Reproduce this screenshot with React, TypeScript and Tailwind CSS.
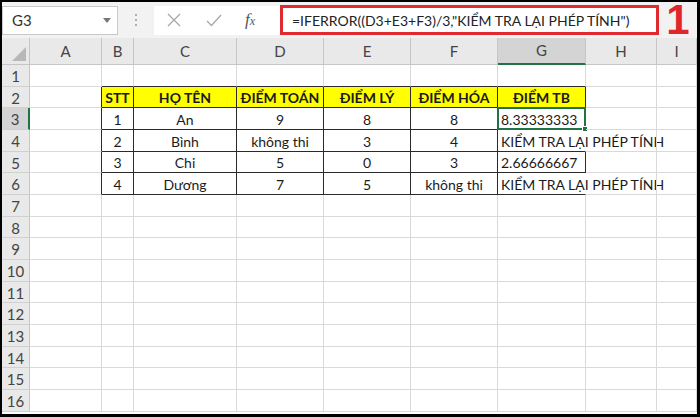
import React from "react";

const COLS = ["A", "B", "C", "D", "E", "F", "G", "H", "I"];

const data: Record<number, string[]> = {
  2: ["STT", "HỌ TÊN", "ĐIỂM TOÁN", "ĐIỂM LÝ", "ĐIỂM HÓA", "ĐIỂM TB"],
  3: ["1", "An", "9", "8", "8", "8.33333333"],
  4: ["2", "Bình", "không thi", "3", "4", "KIỂM TRA LẠI PHÉP TÍNH"],
  5: ["3", "Chi", "5", "0", "3", "2.66666667"],
  6: ["4", "Dương", "7", "5", "không thi", "KIỂM TRA LẠI PHÉP TÍNH"],
};

const inTable = (r: number, c: number) => r >= 2 && r <= 6 && c >= 2 && c <= 7;

function Cell({ r, c }: { r: number; c: number }) {
  const dark = "#2a2a2a";
  const grid = "#d9d9d9";
  let right = inTable(r, c) || inTable(r, c + 1) ? dark : grid;
  if (c === 7 && (r === 4 || r === 6)) right = "transparent";
  const bottom = inTable(r, c) || inTable(r + 1, c) ? dark : grid;
  const header = r === 2 && inTable(r, c);
  const text = inTable(r, c) ? data[r][c - 2] : "";
  const leftAlign = c === 7 && r >= 3;
  const selected = r === 3 && c === 7;
  return (
    <div
      className={`relative flex items-center pt-[2px] whitespace-nowrap text-[14px] text-[#1b1b1b] ${
        leftAlign ? "justify-start pl-[3px]" : "justify-center"
      } ${header ? "bg-[#ffff00] font-bold" : ""}`}
      style={{ borderRight: `1px solid ${right}`, borderBottom: `1px solid ${bottom}` }}
    >
      {text}
      {selected && (
        <div className="absolute -left-[1px] -top-[1px] -right-[1px] -bottom-[1px] border-2 border-[#217346]">
          <div className="absolute -right-[4px] -bottom-[4px] w-[6px] h-[6px] bg-[#217346] border border-white" />
        </div>
      )}
    </div>
  );
}

export default function App() {
  const rows = Array.from({ length: 16 }, (_, i) => i + 1);
  return (
    <div
      className="w-[700px] h-[417px] bg-black pt-[2px] pl-[2px] pr-[3px] overflow-hidden"
      style={{ fontFamily: "Lato, 'Noto Sans', sans-serif" }}
    >
      <div className="h-[412px] bg-white flex flex-col overflow-hidden">
        {/* Formula bar */}
        <div className="h-[36px] bg-[#f2f2f2] flex items-center shrink-0">
          <div className="w-[116px] h-[29px] bg-white border border-[#c9c9c9] flex items-center justify-between pl-[9px] pr-[6px] text-[15px] text-[#333]">
            <span>G3</span>
            <svg width="8" height="5" viewBox="0 0 8 5">
              <path d="M0 0 L8 0 L4 5 Z" fill="#777" />
            </svg>
          </div>
          <div className="w-[36px] flex flex-col items-center gap-[3px]">
            <div className="w-[2px] h-[2px] bg-[#b0b0b0]" />
            <div className="w-[2px] h-[2px] bg-[#b0b0b0]" />
            <div className="w-[2px] h-[2px] bg-[#b0b0b0]" />
          </div>
          <div className="flex-1 h-[29px] bg-white flex items-center">
            <div className="w-[126px] flex items-center">
              <svg width="14" height="14" viewBox="0 0 14 14" className="ml-[13px]">
                <path d="M1 1 L13 13 M13 1 L1 13" stroke="#a8a8a8" strokeWidth="1.3" />
              </svg>
              <svg width="16" height="14" viewBox="0 0 16 14" className="ml-[25px]">
                <path d="M1 8 L5.5 12.5 L15 2" stroke="#a8a8a8" strokeWidth="1.3" fill="none" />
              </svg>
              <span
                className="ml-[23px] italic text-[17px] text-[#555]"
                style={{ fontFamily: "'Liberation Serif', serif" }}
              >
                f<span className="text-[12px]">x</span>
              </span>
            </div>
            <div className="w-[379px] h-[30px] border-[3px] border-[#df2a2f] flex items-center pl-[9px] text-[14px] text-[#222] whitespace-nowrap">
              =IFERROR((D3+E3+F3)/3,"KIỂM TRA LẠI PHÉP TÍNH")
            </div>
            <div className="flex-1 h-[36px] bg-[#f2f2f2] flex items-center justify-center">
              <span
                className="text-[42px] font-bold text-[#e0262b] leading-[36px]"
                style={{ fontFamily: "'Liberation Sans', Arial, sans-serif" }}
              >
                1
              </span>
            </div>
          </div>
        </div>
        {/* Sheet */}
        <div className="grid grid-cols-[28px_72px_32px_103px_87px_87px_87px_88px_71px_1fr] grid-rows-[27px_repeat(17,21.667px)] bg-white">
          <div className="bg-[#e9e9e9] border-r border-b border-[#c6c6c6] flex items-end justify-end pr-[3px] pb-[3px]">
            <svg width="14" height="14" viewBox="0 0 14 14">
              <path d="M14 0 L14 14 L0 14 Z" fill="#b8b8b8" />
            </svg>
          </div>
          {COLS.map((l) => (
            <div
              key={l}
              className={`flex items-center justify-center text-[15px] text-[#444] border-r border-[#c6c6c6] ${
                l === "G" ? "bg-[#d4d4d4] border-b-2 border-b-[#217346]" : "bg-[#e9e9e9] border-b border-b-[#c6c6c6]"
              }`}
            >
              {l}
            </div>
          ))}
          {rows.map((r) => (
            <React.Fragment key={r}>
              <div
                className={`flex items-center justify-center pt-[2px] text-[15px] text-[#444] border-b border-[#d0d0d0] ${
                  r === 3 ? "bg-[#d4d4d4] border-r-2 border-r-[#217346]" : "bg-[#e9e9e9] border-r border-r-[#c6c6c6]"
                }`}
              >
                {r}
              </div>
              {COLS.map((_, i) => (
                <Cell key={i} r={r} c={i + 1} />
              ))}
            </React.Fragment>
          ))}
        </div>
      </div>
    </div>
  );
}
